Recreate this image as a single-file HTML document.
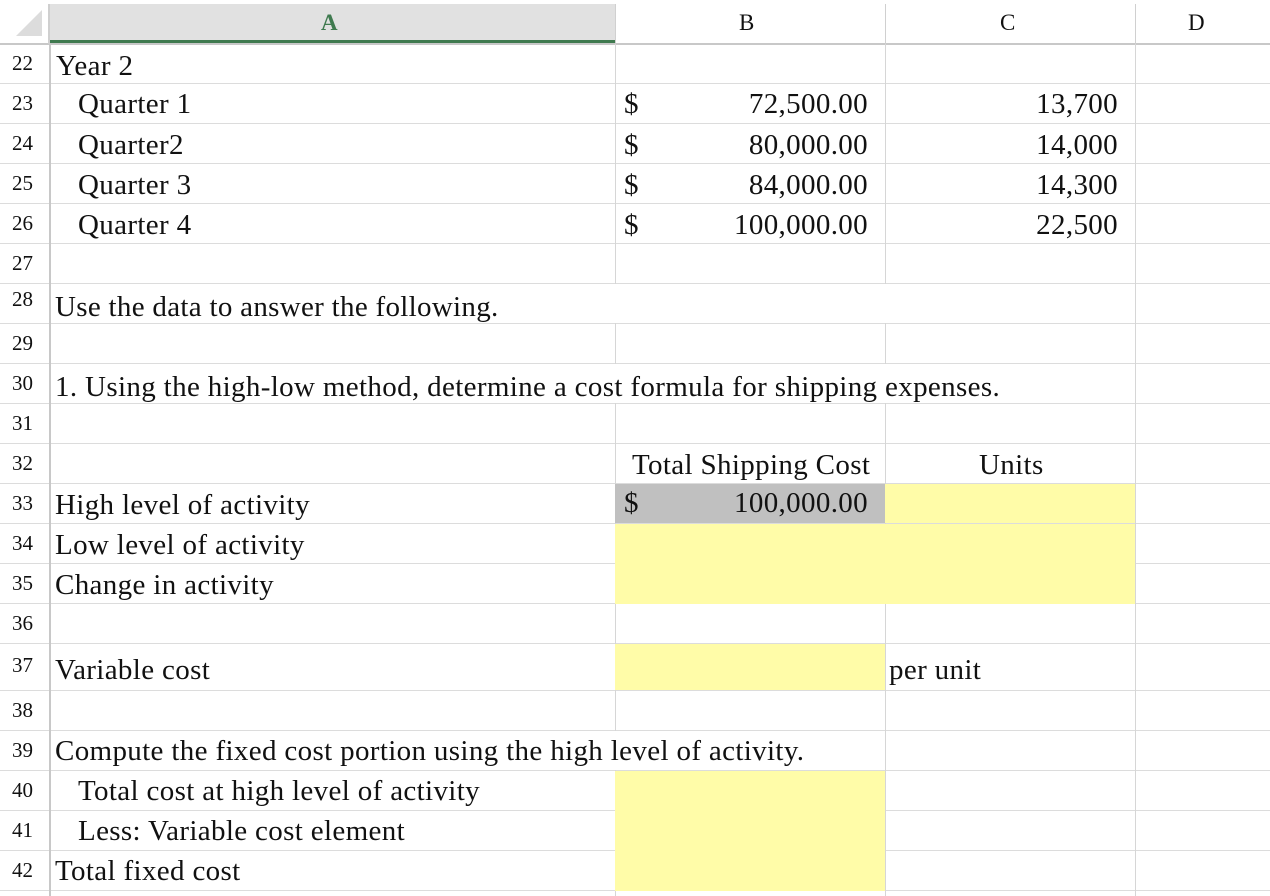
<!DOCTYPE html>
<html><head><meta charset="utf-8"><style>
body{margin:0;width:1270px;height:896px;background:#fff;position:relative;overflow:hidden;font-family:"Liberation Serif","Times New Roman",serif;color:#111}
.h{position:absolute;left:0;width:1270px;height:1px;background:#dcdcdc}
.v{position:absolute;top:44px;width:1px;height:852px;background:#d6d6d6}
.t{position:absolute;font-size:29px;line-height:30px;white-space:nowrap;letter-spacing:0.35px}
.n{position:absolute;left:12px;font-size:21px;line-height:24px}
.r{text-align:right}
.y{position:absolute;background:#fffca8}
</style></head><body>
<!-- header -->
<div style="position:absolute;left:48px;top:4px;width:567px;height:38px;background:#e1e1e1"></div>
<div style="position:absolute;left:48px;top:40px;width:567px;height:4px;background:#3f7a4f"></div>
<div style="position:absolute;left:0;top:43px;width:1270px;height:2px;background:#c8c8c8"></div>
<div style="position:absolute;left:48px;top:4px;width:2px;height:40px;background:#cfcfcf"></div>
<div style="position:absolute;left:615px;top:4px;width:1px;height:40px;background:#d0d0d0"></div>
<div style="position:absolute;left:885px;top:4px;width:1px;height:40px;background:#d0d0d0"></div>
<div style="position:absolute;left:1135px;top:4px;width:1px;height:40px;background:#d0d0d0"></div>
<svg style="position:absolute;left:14px;top:8px" width="28" height="28"><polygon points="28,2 28,28 2,28" fill="#dcdcdc"/></svg>
<div class="t" style="left:321px;top:8px;font-size:23px;font-weight:bold;color:#3f7a4f">A</div>
<div class="t" style="left:739px;top:8px;font-size:23px">B</div>
<div class="t" style="left:1000px;top:8px;font-size:23px">C</div>
<div class="t" style="left:1188px;top:8px;font-size:23px">D</div>

<!-- grid -->
<div class="h" style="top:83px"></div><div class="h" style="top:123px"></div><div class="h" style="top:163px"></div>
<div class="h" style="top:203px"></div><div class="h" style="top:243px"></div><div class="h" style="top:283px"></div>
<div class="h" style="top:323px"></div><div class="h" style="top:363px"></div><div class="h" style="top:403px"></div>
<div class="h" style="top:443px"></div><div class="h" style="top:483px"></div><div class="h" style="top:523px"></div>
<div class="h" style="top:563px"></div><div class="h" style="top:603px"></div><div class="h" style="top:643px"></div>
<div class="h" style="top:690px"></div><div class="h" style="top:730px"></div><div class="h" style="top:770px"></div>
<div class="h" style="top:810px"></div><div class="h" style="top:850px"></div><div class="h" style="top:890px"></div>
<div class="v" style="left:49px;width:2px;background:#c8c8c8"></div>
<div class="v" style="left:615px"></div><div class="v" style="left:885px"></div><div class="v" style="left:1135px"></div>
<!-- cover grid lines inside merged text rows -->
<div style="position:absolute;left:615px;top:284px;width:520px;height:39px;background:#fff"></div>
<div style="position:absolute;left:615px;top:364px;width:520px;height:39px;background:#fff"></div>
<div style="position:absolute;left:615px;top:731px;width:270px;height:39px;background:#fff"></div>
<div style="position:absolute;left:615px;top:484px;width:270px;height:39px;background:#c0c0c0"></div>
<div class="y" style="left:885px;top:484px;width:250px;height:39px"></div>
<div class="y" style="left:615px;top:524px;width:520px;height:80px"></div>
<div class="y" style="left:615px;top:644px;width:270px;height:46px"></div>
<div class="y" style="left:615px;top:771px;width:270px;height:120px"></div>

<!-- row numbers -->
<div class="n" style="top:51px">22</div><div class="n" style="top:91px">23</div><div class="n" style="top:131px">24</div>
<div class="n" style="top:171px">25</div><div class="n" style="top:211px">26</div><div class="n" style="top:251px">27</div>
<div class="n" style="top:287px">28</div><div class="n" style="top:331px">29</div><div class="n" style="top:371px">30</div>
<div class="n" style="top:411px">31</div><div class="n" style="top:451px">32</div><div class="n" style="top:491px">33</div>
<div class="n" style="top:531px">34</div><div class="n" style="top:571px">35</div><div class="n" style="top:611px">36</div>
<div class="n" style="top:653px">37</div><div class="n" style="top:698px">38</div><div class="n" style="top:738px">39</div>
<div class="n" style="top:778px">40</div><div class="n" style="top:818px">41</div><div class="n" style="top:858px">42</div>

<!-- text -->
<div class="t" style="left:56px;top:51px">Year 2</div>
<div class="t" style="left:78px;top:89px">Quarter 1</div>
<div class="t" style="left:78px;top:130px">Quarter2</div>
<div class="t" style="left:78px;top:170px">Quarter 3</div>
<div class="t" style="left:78px;top:210px">Quarter 4</div>
<div class="t" style="left:624px;top:89px">$</div><div class="t r" style="right:402px;top:89px">72,500.00</div><div class="t r" style="right:152px;top:89px">13,700</div>
<div class="t" style="left:624px;top:130px">$</div><div class="t r" style="right:402px;top:130px">80,000.00</div><div class="t r" style="right:152px;top:130px">14,000</div>
<div class="t" style="left:624px;top:170px">$</div><div class="t r" style="right:402px;top:170px">84,000.00</div><div class="t r" style="right:152px;top:170px">14,300</div>
<div class="t" style="left:624px;top:210px">$</div><div class="t r" style="right:402px;top:210px">100,000.00</div><div class="t r" style="right:152px;top:210px">22,500</div>
<div class="t" style="left:55px;top:292px;letter-spacing:0.3px">Use the data to answer the following.</div>
<div class="t" style="left:55px;top:372px">1. Using the high-low method, determine a cost formula for shipping expenses.</div>
<div class="t" style="left:632px;top:450px">Total Shipping Cost</div>
<div class="t" style="left:979px;top:450px">Units</div>
<div class="t" style="left:55px;top:490px">High level of activity</div>
<div class="t" style="left:624px;top:488px">$</div><div class="t r" style="right:402px;top:488px">100,000.00</div>
<div class="t" style="left:55px;top:530px">Low level of activity</div>
<div class="t" style="left:55px;top:570px">Change in activity</div>
<div class="t" style="left:55px;top:655px">Variable cost</div>
<div class="t" style="left:889px;top:655px">per unit</div>
<div class="t" style="left:55px;top:736px">Compute the fixed cost portion using the high level of activity.</div>
<div class="t" style="left:78px;top:776px">Total cost at high level of activity</div>
<div class="t" style="left:78px;top:816px">Less: Variable cost element</div>
<div class="t" style="left:55px;top:856px">Total fixed cost</div>
</body></html>
